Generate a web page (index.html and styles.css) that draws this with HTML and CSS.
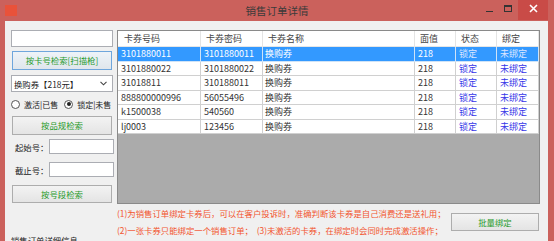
FILE: index.html
```html
<!DOCTYPE html>
<html lang="zh-CN">
<head>
<meta charset="utf-8">
<title>销售订单详情</title>
<link rel="stylesheet" href="styles.css">
</head>
<body>
<div class="window">
  <div class="titlebar">
    <div class="tb-left"><span class="app-icon"></span></div>
    <div class="title">销售订单详情</div>
    <div class="controls">
      <span class="ctl min"><span class="dash"></span></span>
      <span class="ctl max"><span class="box"></span></span>
      <span class="ctl close">
        <svg width="9" height="9" viewBox="0 0 9 9"><path d="M1 1 L8 8 M8 1 L1 8" stroke="#fff" stroke-width="1.6"/></svg>
      </span>
    </div>
  </div>
  <div class="content">
    <div class="left">
      <input class="field wide" type="text">
      <button class="btn btn-focus">按卡号检索[扫描枪]</button>
      <div class="select">
        <span>换购券【218元】</span>
        <svg width="7" height="5" viewBox="0 0 7 5"><path d="M0.5 0.8 L3.5 3.8 L6.5 0.8" fill="none" stroke="#444" stroke-width="1.1"/></svg>
      </div>
      <div class="radios">
        <label class="radio"><span class="dot"></span>激活|已售</label>
        <label class="radio checked"><span class="dot"></span>锁定|未售</label>
      </div>
      <button class="btn">按品规检索</button>
      <div class="frow first"><span class="lbl">起始号：</span><input class="field small" type="text"></div>
      <div class="frow"><span class="lbl">截止号：</span><input class="field small" type="text"></div>
      <button class="btn btn-last">按号段检索</button>
      <div class="section">销售订单详细信息</div>
    </div>
    <div class="right">
      <div class="gridbox">
        <div class="row head">
          <div class="c">卡券号码</div><div class="c">卡券密码</div><div class="c">卡券名称</div><div class="c">面值</div><div class="c">状态</div><div class="c">绑定</div>
        </div>
        <div class="row sel">
          <div class="c">3101880011</div><div class="c">3101880011</div><div class="c">换购券</div><div class="c">218</div><div class="c link">锁定</div><div class="c link">未绑定</div>
        </div>
        <div class="row">
          <div class="c">3101880022</div><div class="c">3101880022</div><div class="c">换购券</div><div class="c">218</div><div class="c link">锁定</div><div class="c link">未绑定</div>
        </div>
        <div class="row">
          <div class="c">31018811</div><div class="c">310188011</div><div class="c">换购券</div><div class="c">218</div><div class="c link">锁定</div><div class="c link">未绑定</div>
        </div>
        <div class="row">
          <div class="c">888800000996</div><div class="c">56055496</div><div class="c">换购券</div><div class="c">218</div><div class="c link">锁定</div><div class="c link">未绑定</div>
        </div>
        <div class="row">
          <div class="c">k1500038</div><div class="c">540560</div><div class="c">换购券</div><div class="c">218</div><div class="c link">锁定</div><div class="c link">未绑定</div>
        </div>
        <div class="row">
          <div class="c">lj0003</div><div class="c">123456</div><div class="c">换购券</div><div class="c">218</div><div class="c link">锁定</div><div class="c link">未绑定</div>
        </div>
      </div>
      <div class="footer">
        <div class="notes">
          <p>(1)为销售订单绑定卡券后，可以在客户投诉时，准确判断该卡券是自己消费还是送礼用；</p>
          <p>(2)一张卡券只能绑定一个销售订单；&nbsp;&nbsp;(3)未激活的卡券，在绑定时会同时完成激活操作；</p>
        </div>
        <button class="btn batch">批量绑定</button>
      </div>
    </div>
  </div>
</div>
</body>
</html>
```
FILE: styles.css
```css
* { box-sizing: border-box; }
html, body {
  margin: 0;
  padding: 0;
  width: 554px;
  height: 241px;
  overflow: hidden;
  font-family: "Noto Sans CJK SC", "Noto Sans", sans-serif;
  font-size: 8.4px;
  color: #333;
}
.window {
  background: #cb615c;
  width: 554px;
  height: 241px;
  padding: 0 6px 0 5px;
  display: flex;
  flex-direction: column;
}
.titlebar {
  height: 21px;
  margin: 0 -6px 0 -5px;
  display: grid;
  grid-template-columns: 1fr auto 1fr;
  align-items: start;
}
.tb-left { padding: 5px 0 0 5px; }
.app-icon {
  display: block;
  width: 12px;
  height: 11px;
  background: #e9523a;
}
.title {
  font-size: 10.5px;
  line-height: 21px;
  color: #3a3a3a;
}
.controls {
  justify-self: end;
  display: flex;
  height: 21px;
  margin-right: 6px;
}
.ctl {
  display: flex;
  align-items: center;
  justify-content: center;
  height: 20px;
}
.min { width: 18px; }
.dash { width: 7px; height: 1px; background: #333; margin-top: 2px; }
.max { width: 20px; }
.box { width: 8px; height: 7px; border: 1px solid #333; border-top-width: 2px; margin-top: -3px; }
.close { width: 30px; background: #c94b47; align-items: flex-start; padding-top: 4px; }
.content {
  flex: 1;
  background: #f0f0f0;
  display: flex;
  gap: 4px;
  padding: 9px 8px 0 6px;
}
.left {
  width: 102px;
  flex-shrink: 0;
  display: flex;
  flex-direction: column;
}
.field {
  display: block;
  border: 1px solid #abadb3;
  background: #fff;
  padding: 0;
  margin: 0;
  font: inherit;
}
.field.wide { width: 102px; height: 17px; }
.btn {
  display: block;
  font-family: inherit;
  font-size: 8.4px;
  color: #1f9a2a;
  background: linear-gradient(#f3f3f3, #e4e4e4);
  border: 1px solid #adadad;
  border-radius: 0;
  padding: 0;
  margin: 0;
  line-height: 1;
  white-space: nowrap;
}
.left .btn { width: 100px; height: 19px; margin-left: 1px; margin-top: 5px; }
.left .btn-focus { margin-top: 4px; border-color: #6fa6dc; background: linear-gradient(#eef3f8, #e0e6ec); }
.left .btn-last { margin-top: 8px; height: 18px; }
.select {
  margin-top: 5px;
  height: 17px;
  width: 102px;
  background: #fff;
  border: 1px solid #abadb3;
  display: flex;
  align-items: center;
  justify-content: space-between;
  padding: 0 5px 0 2px;
  color: #222;
  white-space: nowrap;
}
.radios {
  margin-top: 5px;
  height: 14px;
  display: flex;
  align-items: center;
  gap: 6px;
  color: #222;
  font-size: 8px;
  white-space: nowrap;
}
.radio { display: flex; align-items: center; gap: 4px; flex-shrink: 0; }
.dot {
  width: 9px;
  height: 9px;
  border-radius: 50%;
  border: 1px solid #555;
  background: #fff;
  position: relative;
  flex-shrink: 0;
}
.radio.checked .dot::after {
  content: "";
  position: absolute;
  left: 1.5px;
  top: 1.5px;
  width: 4px;
  height: 4px;
  border-radius: 50%;
  background: #222;
}
.frow {
  margin-top: 8px;
  height: 15px;
  display: flex;
  align-items: center;
  color: #222;
  white-space: nowrap;
}
.frow.first { margin-top: 4px; }
.lbl { padding-left: 4px; flex-shrink: 0; }
.field.small { width: 65px; height: 15px; margin-left: auto; margin-right: 1px; flex-shrink: 0; }
.section { margin-top: 31px; color: #222; white-space: nowrap; }
.right {
  width: 423px;
  display: flex;
  flex-direction: column;
}
.gridbox {
  height: 174px;
  border: 1px solid #8a8a8a;
  background: #ababab;
  font-size: 9px;
}
.row {
  display: grid;
  grid-template-columns: 83px 62px 152px 41px 41px 42px;
  height: 14.5px;
  background: #fff;
  border-bottom: 1px solid #d0d0d0;
  color: #333;
}
.row .c {
  border-right: 1px solid #d0d0d0;
  padding-left: 3px;
  display: flex;
  align-items: center;
  white-space: nowrap;
  overflow: hidden;
}
.row .c:nth-child(3) { padding-left: 2px; }
.row.head { height: 16px; border-bottom: 1px solid #e6e6e6; }
.row.head .c { padding-left: 5px; border-right-color: #e4e4e4; color: #444; }
.row.head .c:first-child { padding-left: 6px; }
.row .link { color: #3636e8; }
.row.sel { background: #3399ff; color: #fff; border-bottom-color: #cfe3f7; }
.row.sel .c { border-right-color: #cfe3f7; }
.row.sel .link { color: #dde6ff; }
.footer {
  display: flex;
  justify-content: space-between;
  align-items: flex-start;
}
.notes p {
  margin: 0;
  line-height: 17px;
  color: #f2552f;
  white-space: nowrap;
  font-size: 8.4px;
}
.notes p:first-child { margin-top: 1px; }
.footer .btn.batch {
  width: 88px;
  height: 18px;
  margin-top: 9px;
  margin-right: 1px;
}
```
